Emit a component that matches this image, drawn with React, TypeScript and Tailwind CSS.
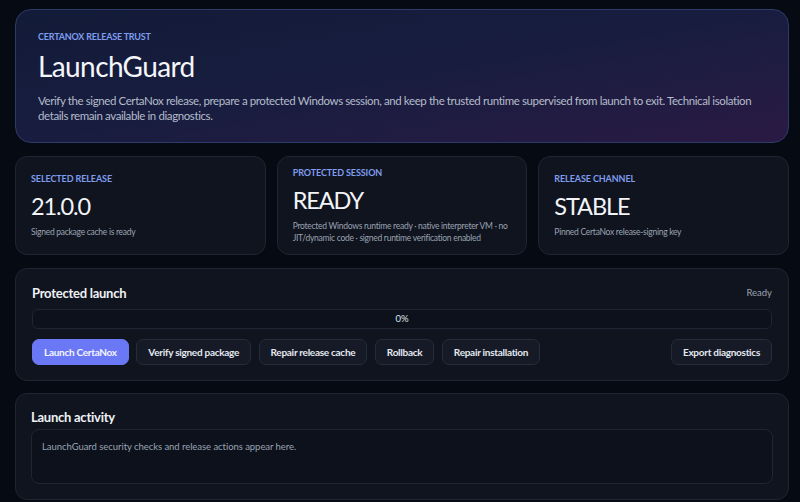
import React from "react";

const btnBase =
  "h-[26px] px-[11px] rounded-[7px] border text-[10px] font-bold tracking-[-0.28px] flex items-center whitespace-nowrap";
const btn = btnBase + " border-[#252c3a] bg-[#151a26] text-[#e4e8f0]";
const btnPrimary = btnBase + " border-[#6b78f6] bg-[#6b78f6] text-[#f4f5ff]";

function Stat({ label, value, sub }: { label: string; value: string; sub: React.ReactNode }) {
  return (
    <div className="flex-1 rounded-[12px] border border-[#1f2532] bg-[#10141e] px-[15px] flex flex-col justify-center h-[99px]">
      <div className="text-[9px] font-bold tracking-[-0.1px] text-[#7f9cf0] leading-[12px]">{label}</div>
      <div className="text-[23.5px] leading-[30px] tracking-[-1.1px] text-[#f2f4f8] mt-[6px]">{value}</div>
      <div className="text-[8.5px] leading-[11.5px] tracking-[-0.27px] text-[#9aa3b2] mt-[6px]">{sub}</div>
    </div>
  );
}

export default function App() {
  return (
    <div
      className="min-h-[502px] w-full bg-[#060a13] pl-[15px] pr-[11px] pt-[9px] pb-[3px] flex flex-col"
      style={{ fontFamily: 'Lato, "Noto Sans", sans-serif' }}
    >
      <div className="rounded-[16px] border border-[#2c3b68] bg-gradient-to-br from-[#121b38] via-[#181d3f] to-[#2a1a44] px-[22px] pt-[21px] pb-[19px]">
        <div className="text-[9px] font-bold tracking-[-0.2px] text-[#7f9cf0] leading-[12px]">CERTANOX RELEASE TRUST</div>
        <div className="text-[28px] leading-[36px] tracking-[-0.6px] text-[#f4f6fa] mt-[5px]">LaunchGuard</div>
        <div className="text-[11.5px] leading-[15px] tracking-[-0.4px] text-[#b4bccb] mt-[9px]">
          Verify the signed CertaNox release, prepare a protected Windows session, and keep the trusted runtime supervised from launch to exit. Technical isolation details remain available in diagnostics.
        </div>
      </div>

      <div className="flex gap-[11px] mt-[13px]">
        <Stat label="SELECTED RELEASE" value="21.0.0" sub="Signed package cache is ready" />
        <Stat
          label="PROTECTED SESSION"
          value="READY"
          sub="Protected Windows runtime ready · native interpreter VM · no JIT/dynamic code · signed runtime verification enabled"
        />
        <Stat label="RELEASE CHANNEL" value="STABLE" sub="Pinned CertaNox release-signing key" />
      </div>

      <div className="mt-[13px] rounded-[12px] border border-[#1f2532] bg-[#10141e] px-[16px] pt-[15px] pb-[15px]">
        <div className="flex items-center justify-between">
          <div className="text-[13px] font-bold tracking-[-0.25px] text-[#eef1f6] leading-[18px]">Protected launch</div>
          <div className="text-[9.5px] text-[#9aa3b2]">Ready</div>
        </div>
        <div className="mt-[7px] h-[20px] rounded-[6px] border border-[#1e2534] bg-[#0c111c] flex items-center justify-center text-[9.5px] text-[#dfe4ec]">
          0%
        </div>
        <div className="mt-[10px] flex items-center gap-[7.5px]">
          <div className={btnPrimary}>Launch CertaNox</div>
          <div className={btn}>Verify signed package</div>
          <div className={btn}>Repair release cache</div>
          <div className={btn}>Rollback</div>
          <div className={btn}>Repair installation</div>
          <div className="flex-1" />
          <div className={btn}>Export diagnostics</div>
        </div>
      </div>

      <div className="mt-[12px] rounded-[12px] border border-[#1f2532] bg-[#10141e] px-[15px] pt-[14px] pb-[15px]">
        <div className="text-[13px] font-bold tracking-[-0.25px] text-[#eef1f6] leading-[18px]">Launch activity</div>
        <div className="mt-[3px] h-[55px] rounded-[8px] border border-[#1e2534] bg-[#0c111c] px-[10px] pt-[10px] text-[9.5px] tracking-[-0.05px] text-[#9aa3b2]">
          LaunchGuard security checks and release actions appear here.
        </div>
      </div>
    </div>
  );
}
